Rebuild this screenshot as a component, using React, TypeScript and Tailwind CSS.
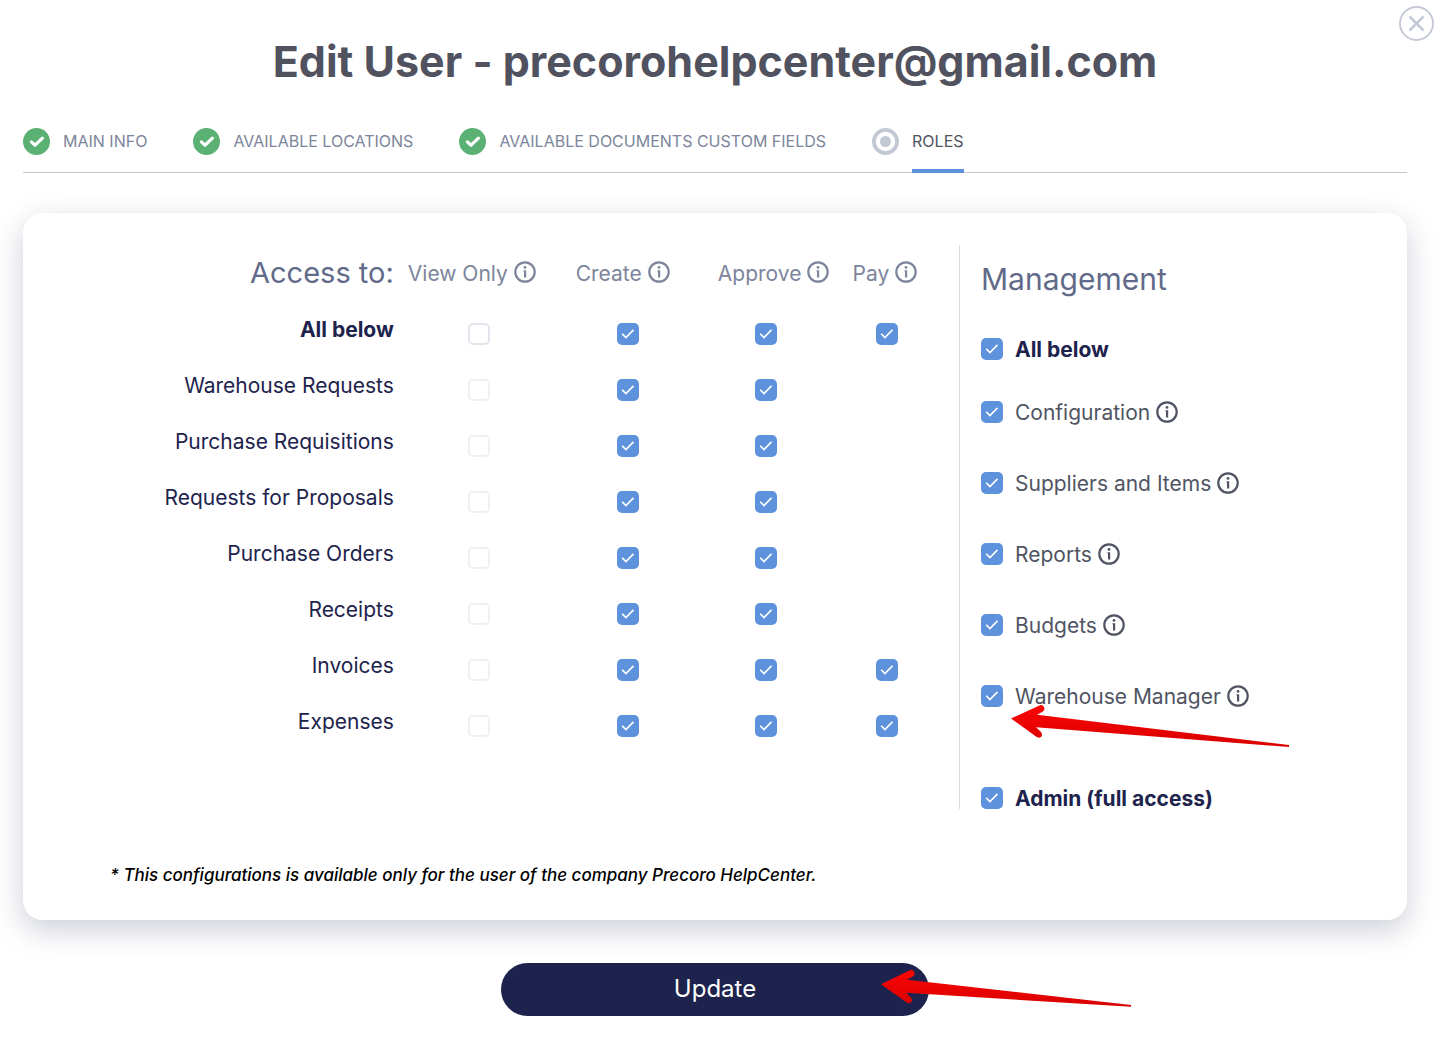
import { useState } from "react"

type IconProps = { className?: string }

const steps = [
    { name: "MAIN INFO", done: true },
    { name: "AVAILABLE LOCATIONS", done: true },
    { name: "AVAILABLE DOCUMENTS CUSTOM FIELDS", done: true },
    { name: "ROLES", done: false },
]

const columns = ["View Only", "Create", "Approve", "Pay"]

const documents = [
    { name: "All below", pay: true },
    { name: "Warehouse Requests", pay: false },
    { name: "Purchase Requisitions", pay: false },
    { name: "Requests for Proposals", pay: false },
    { name: "Purchase Orders", pay: false },
    { name: "Receipts", pay: false },
    { name: "Invoices", pay: true },
    { name: "Expenses", pay: true },
]

const managementRoles = ["Configuration", "Suppliers and Items", "Reports", "Budgets", "Warehouse Manager"]

const DoneIcon = () => (
    <svg viewBox="0 0 27 27" className="size-[27px] shrink-0" aria-hidden="true">
        <circle cx="13.5" cy="13.5" r="13.5" fill="#5bb174" />
        <path d="M8.4 13.9l3.7 3.3 7.3-7" fill="none" stroke="#fff" strokeWidth="3.2" strokeLinecap="round" strokeLinejoin="round" />
    </svg>
)

const CurrentIcon = () => (
    <svg viewBox="0 0 27 27" className="size-[27px] shrink-0" aria-hidden="true">
        <circle cx="13.5" cy="13.5" r="11.6" fill="none" stroke="#c3c9d4" strokeWidth="3.8" />
        <circle cx="13.5" cy="13.5" r="5.5" fill="#c3c9d4" />
    </svg>
)

const InfoIcon = ({ className }: IconProps) => (
    <svg viewBox="0 0 22 22" className={className} aria-hidden="true">
        <circle cx="11" cy="11" r="9.7" fill="none" stroke="currentColor" strokeWidth="2.2" />
        <circle cx="11" cy="6.4" r="1.4" fill="currentColor" />
        <path d="M9.5 9.2h2.7v7.2h-2.2v-5.9h-.5z" fill="currentColor" />
    </svg>
)

const InfoButton = ({ name }: { name: string }) => (
    <button type="button" aria-label={`About ${name}`} className="ml-[6px] shrink-0">
        <InfoIcon className="size-[22px]" />
    </button>
)

const Checkbox = ({ id, label, initial, faded }: { id?: string; label?: string; initial: boolean; faded?: boolean }) => {
    const [checked, setChecked] = useState(initial)

    return (
        <span className="grid size-[22px] shrink-0">
            <input
                id={id}
                type="checkbox"
                aria-label={label}
                checked={checked}
                onChange={(e) => setChecked(e.target.checked)}
                className={`peer col-start-1 row-start-1 size-[22px] appearance-none rounded-[5px] border-2 bg-white checked:border-[#5f92dc] checked:bg-[#5f92dc] ${faded ? "border-[#eef0f4]" : "border-[#e2e6ec]"}`}
            />
            <svg viewBox="0 0 22 22" className="pointer-events-none invisible col-start-1 row-start-1 size-[22px] peer-checked:visible" aria-hidden="true">
                <path d="M5.2 10.7l3.7 3.8 7.6-7.6" fill="none" stroke="#fff" strokeWidth="1.6" />
            </svg>
        </span>
    )
}

const CheckboxCell = ({ label, initial, faded }: { label: string; initial: boolean; faded?: boolean }) => (
    <td>
        <div className="flex justify-center">
            <Checkbox label={label} initial={initial} faded={faded} />
        </div>
    </td>
)

const AccessTable = () => (
    <table className="w-full table-fixed text-[21px] leading-[28px]">
        <colgroup>
            <col className="w-[41.2%]" />
            <col className="w-[17%]" />
            <col className="w-[15.5%]" />
            <col className="w-[14.7%]" />
            <col className="w-[11.6%]" />
        </colgroup>
        <thead>
            <tr className="h-[61px]">
                <th className="pr-[7px] pb-[6px] text-right text-[29px] font-normal text-[#626a8a]">Access to:</th>
                {columns.map((column, i) => (
                    <th key={column} className={`pb-[7px] text-left font-normal whitespace-nowrap text-[#7c859b] ${i === 0 ? "pl-[7px]" : "pl-[19px]"}`}>
                        <span className="flex items-center">
                            <span className="pt-[3px]">{column}</span>
                            <InfoButton name={column} />
                        </span>
                    </th>
                ))}
            </tr>
        </thead>
        <tbody>
            {documents.map((doc, i) => (
                <tr key={doc.name} className="h-[56px]">
                    <th className={`pr-[7px] pb-2 text-right text-[#1d234d] ${i === 0 ? "font-bold" : "font-normal"}`}>{doc.name}</th>
                    <CheckboxCell label={`${doc.name}: View Only`} initial={false} faded={i > 0} />
                    <CheckboxCell label={`${doc.name}: Create`} initial={true} />
                    <CheckboxCell label={`${doc.name}: Approve`} initial={true} />
                    {doc.pay ? <CheckboxCell label={`${doc.name}: Pay`} initial={true} /> : <td />}
                </tr>
            ))}
        </tbody>
    </table>
)

const Management = () => (
    <div className="border-l border-[#d9dce3] pl-[21px] text-[21px]">
        <h2 className="pt-[14px] text-[30px] leading-[40px] text-[#626a8a]">Management</h2>
        <div className="mt-[39px] flex h-[22px] items-center gap-3 leading-[22px] font-bold text-[#1d234d]">
            <Checkbox id="management-all" initial={true} />
            <label htmlFor="management-all" className="pt-[2px]">All below</label>
        </div>
        <ul className="mt-4 leading-[28px] text-[#505463]">
            {managementRoles.map((role) => (
                <li key={role} className="relative flex h-[71px] items-center">
                    <Checkbox id={role} initial={true} />
                    <label htmlFor={role} className="ml-3 pt-[3px]">{role}</label>
                    <InfoButton name={role} />
                    {role === "Warehouse Manager" && (
                        <svg viewBox="0 0 280 44" className="pointer-events-none absolute top-[44px] left-[30px] h-[44px] w-[280px]" aria-hidden="true">
                            <defs>
                                <linearGradient id="roleArrow" x1="0" y1="0" x2="0" y2="1">
                                    <stop offset="0" stopColor="#fb0505" />
                                    <stop offset="1" stopColor="#d80000" />
                                </linearGradient>
                            </defs>
                            <path d="M0 14.5L29 1.2Q32 .6 33.3 3.5Q34 6.5 31.5 7.8L26 10.8L278 41V43L25 23.3L30 28Q32 31 30 33Q27.5 34.5 25 32.5Z" fill="url(#roleArrow)" />
                        </svg>
                    )}
                </li>
            ))}
        </ul>
        <div className="mt-[56px] flex h-[22px] items-center gap-3 leading-[22px] font-bold text-[#1d234d]">
            <Checkbox id="admin" initial={true} />
            <label htmlFor="admin" className="pt-[2px]">Admin (full access)</label>
        </div>
    </div>
)

const App = () => {
    return (
        <div className="relative min-h-screen bg-white pt-[35px] pr-[31px] pb-7 pl-[23px] font-['Inter',sans-serif]">
            <button type="button" aria-label="Close" className="absolute top-[6px] right-1">
                <svg viewBox="0 0 35 35" className="size-[35px]" aria-hidden="true">
                    <circle cx="17.5" cy="17.5" r="16.5" fill="none" stroke="#c3c9d6" strokeWidth="1.9" />
                    <path d="M10.5 10.5l14 14M24.5 10.5l-14 14" stroke="#c3c9d6" strokeWidth="2.6" />
                </svg>
            </button>

            <h1 className="text-center text-[43px] leading-[53px] font-bold text-[#505260]">Edit User - precorohelpcenter@gmail.com</h1>

            <nav className="mt-10 flex gap-[46px] border-b border-[#c0c8d3] text-base leading-[27px]">
                {steps.map((step) => (
                    <a key={step.name} href="#" className="-mb-px flex items-start gap-[13px]">
                        {step.done ? <DoneIcon /> : <CurrentIcon />}
                        <span className={`border-b-4 pb-[14px] ${step.done ? "border-transparent text-[#7c859b]" : "border-[#5f92dc] text-[#505463]"}`}>{step.name}</span>
                    </a>
                ))}
            </nav>

            <main className="mt-10 rounded-[20px] bg-white pt-8 pb-[31px] shadow-[0_10px_30px_rgba(29,35,77,0.22)]">
                <div className="grid grid-cols-[936fr_448fr]">
                    <div className="pr-[19px]">
                        <AccessTable />
                    </div>
                    <Management />
                </div>
                <p className="mt-[52px] pl-[87px] text-[17px] leading-[28px] font-medium text-black italic">
                    * This configurations is available only for the user of the company Precoro HelpCenter.
                </p>
            </main>

            <div className="mt-[43px] flex justify-center">
                <button type="button" className="relative h-[53px] w-[428px] rounded-full bg-[#1d234d] pb-[2px] text-2xl text-white">
                    Update
                    <svg viewBox="0 0 252 40" className="pointer-events-none absolute top-[6px] left-[380px] h-[40px] w-[252px]" aria-hidden="true">
                        <defs>
                            <linearGradient id="updateArrow" x1="0" y1="0" x2="0" y2="1">
                                <stop offset="0" stopColor="#fb0505" />
                                <stop offset="1" stopColor="#d80000" />
                            </linearGradient>
                        </defs>
                        <path d="M0 15.3L29 1.2Q32 .6 33.5 3.5Q34 6.5 31.5 7.8L26 10.8L250 36V37.8L25 23.8L30 28.5Q32 31.5 30 33.5Q27.5 35 25 33Z" fill="url(#updateArrow)" />
                    </svg>
                </button>
            </div>
        </div>
    )
}
export default App
